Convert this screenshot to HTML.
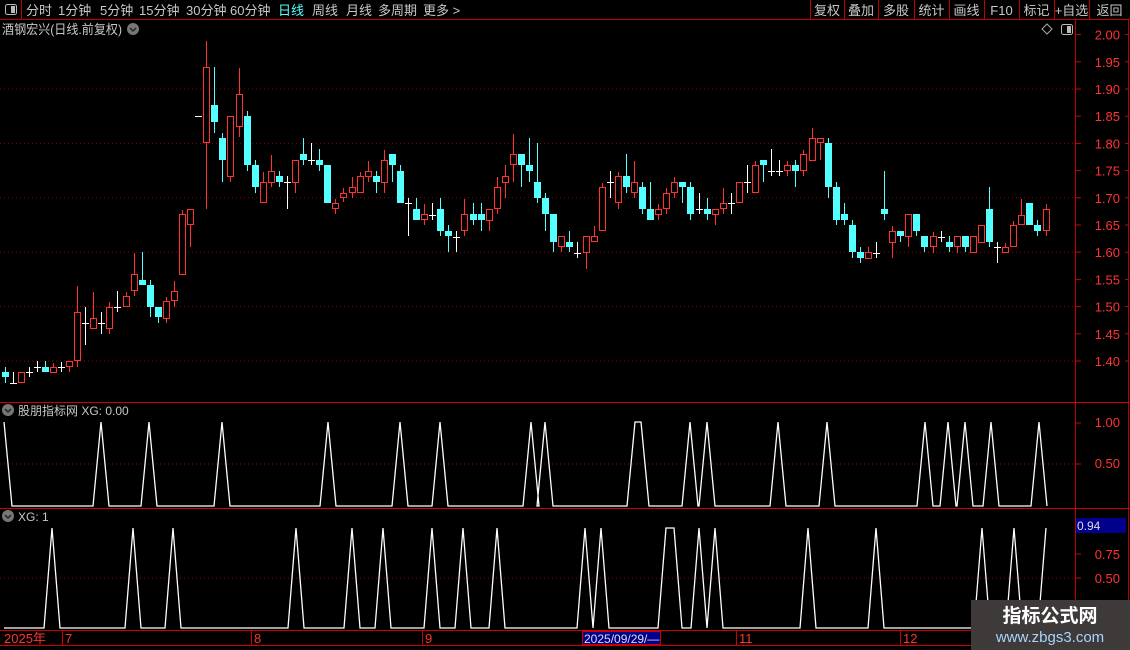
<!DOCTYPE html>
<html><head><meta charset="utf-8"><style>
body{margin:0;background:#000;width:1130px;height:650px;overflow:hidden;font-family:"Liberation Sans","Noto Sans CJK SC",sans-serif;}
svg{position:absolute;left:0;top:0}
text{font-family:"Liberation Sans","Noto Sans CJK SC",sans-serif}
</style></head><body>
<svg id="s" width="1130" height="650" xmlns="http://www.w3.org/2000/svg"></svg>
<script>
var o=[];
function A(s){o.push(s);}
A('<rect x="0" y="0" width="1130" height="19" fill="#000"/>');
A('<line x1="0" y1="19.5" x2="1130" y2="19.5" stroke="#c00000"/>');
A('<line x1="21.5" y1="0" x2="21.5" y2="19" stroke="#c00000"/>');
A('<rect x="5.5" y="4.5" width="11" height="10" rx="2" fill="none" stroke="#bbb"/><rect x="11" y="6" width="4" height="7" fill="#bbb"/>');
var tb=[["分时",26],["1分钟",58],["5分钟",100],["15分钟",139],["30分钟",186],["60分钟",230],["日线",278],["周线",312],["月线",346],["多周期",378],["更多 >",423]];
tb.forEach(function(t){A('<text x="'+t[1]+'" y="15" font-size="13" fill="'+(t[0]=="日线"?"#54ffff":"#c8c8c8")+'">'+t[0]+'</text>');});
var rb=[["复权",810],["叠加",844],["多股",878],["统计",914],["画线",949],["F10",984],["标记",1019],["+自选",1054],["返回",1089]];
rb.forEach(function(t,i){A('<line x1="'+(t[1]+0.5)+'" y1="0" x2="'+(t[1]+0.5)+'" y2="19" stroke="#c00000"/>');
var nx=i<8?rb[i+1][1]:1130;A('<text x="'+((t[1]+nx)/2)+'" y="15" font-size="13" text-anchor="middle" fill="#c8c8c8">'+t[0]+'</text>');});
A('<text x="2" y="34" font-size="13" fill="#c8c8c8" textLength="120" lengthAdjust="spacingAndGlyphs">酒钢宏兴(日线.前复权)</text>');
function chev(x,y){A('<circle cx="'+x+'" cy="'+y+'" r="6" fill="#777"/><path d="M'+(x-3)+' '+(y-1)+'l3 3l3 -3" stroke="#222" stroke-width="1.5" fill="none"/>');}
chev(133,29);
A('<path d="M1047 24l5 5l-5 5l-5 -5z" fill="none" stroke="#aaa"/>');
A('<rect x="1061.5" y="24.5" width="11" height="10" rx="2" fill="none" stroke="#bbb"/><rect x="1067" y="26" width="4" height="7" fill="#bbb"/>');
A('<line x1="1075.5" y1="20" x2="1075.5" y2="630" stroke="#c00000"/>');
A('<line x1="1128.5" y1="20" x2="1128.5" y2="630" stroke="#c00000"/>');
[402.5,508.5,630.5,645.5].forEach(function(y){A('<line x1="0" y1="'+y+'" x2="1130" y2="'+y+'" stroke="#d00000"/>');});
function py(p){return 361-(p-1.40)*544;}
[1.9,1.8,1.7,1.6,1.5,1.4].forEach(function(p){A('<line x1="0" y1="'+py(p)+'" x2="1075" y2="'+py(p)+'" stroke="#900000" stroke-dasharray="1 3"/>');});
for(var p=1.40;p<=2.001;p+=0.05){var y=py(p);A('<line x1="1075" y1="'+y+'" x2="1081" y2="'+y+'" stroke="#d00000"/><line x1="1125" y1="'+y+'" x2="1129" y2="'+y+'" stroke="#d00000"/>');
A('<text x="1120" y="'+(y+5)+'" font-size="13" text-anchor="end" fill="#ff3232">'+p.toFixed(2)+'</text>');}
var C=[
['c',372,377,367,383],['w',383,383,372,383],['r',372,383,372,383],['w',372,372,367,377],['w',367,367,361,372],['c',367,372,361,372],['r',367,373,363,373],['w',367,367,362,372],['r',361,367,361,372],['r',312,361,286,367],
['w',323,323,307,345],['r',318,329,292,329],['w',323,323,312,334],['r',307,329,302,334],['w',307,307,291,312],['r',296,307,292,307],['r',274,291,253,296],['c',280,285,252,285],['c',285,307,280,317],['c',307,317,307,323],
['r',301,319,297,323],['r',291,301,281,307],['r',214,275,210,275],['r',209,225,209,247],['w',116,116,116,116],['r',67,143,41,209],['c',105,122,67,133],['c',138,160,133,182],['r',116,177,116,182],['r',94,127,68,137],
['c',116,165,111,171],['c',165,187,160,193],['r',182,203,172,203],['r',171,183,155,187],['c',176,182,171,187],['w',182,182,176,209],['r',160,183,160,193],['c',154,160,138,165],['w',160,160,143,165],['c',160,165,149,171],
['c',165,203,165,203],['r',203,209,199,214],['r',193,198,188,202],['r',187,193,177,198],['r',176,193,172,193],['r',171,177,161,182],['c',176,182,171,193],['r',160,183,150,193],['c',154,165,154,182],['c',171,203,165,203],
['w',203,203,198,236],['c',209,220,198,220],['r',214,220,204,225],['w',215,215,203,220],['c',209,231,198,236],['c',231,236,225,252],['w',237,237,231,252],['r',214,231,199,236],['c',214,220,203,225],['c',214,220,203,231],
['r',209,221,209,231],['r',187,209,177,214],['r',176,183,165,198],['r',154,165,134,182],['c',154,165,154,187],['c',165,171,138,182],['c',182,198,143,203],['c',198,214,193,231],['c',214,242,214,252],['r',236,247,236,252],
['c',242,247,231,252],['w',253,253,242,258],['r',236,253,236,269],['r',236,242,226,242],['r',187,231,183,231],['w',182,182,171,198],['r',176,203,172,209],['c',176,187,154,193],['r',182,193,161,198],['c',187,209,182,214],
['c',209,220,182,220],['r',209,215,204,220],['r',193,209,188,214],['r',182,193,177,198],['c',182,187,182,203],['c',187,214,182,220],['w',209,209,193,214],['c',209,214,198,220],['r',209,215,209,225],['r',203,209,188,214],
['w',203,203,193,214],['r',182,203,182,203],['w',182,182,165,193],['r',165,193,161,193],['c',160,165,160,182],['w',171,171,149,176],['w',171,171,160,176],['r',165,171,161,176],['c',165,171,160,187],['r',154,171,150,176],
['r',138,161,128,161],['r',138,143,138,160],['c',143,187,138,198],['c',187,220,182,225],['c',214,220,203,225],['c',225,252,220,258],['c',252,258,247,263],['r',252,259,247,259],['w',253,253,242,258],['c',209,214,171,220],
['r',231,243,226,258],['c',231,236,231,242],['r',214,237,214,247],['c',214,231,214,236],['c',236,247,236,252],['r',236,247,232,253],['w',237,237,231,242],['c',242,247,236,252],['r',236,247,236,253],['c',236,247,236,252],
['r',236,253,236,253],['r',225,243,225,243],['c',209,242,187,247],['w',247,247,242,263],['r',247,253,243,253],['r',225,247,221,247],['r',215,225,199,225],['c',203,225,203,225],['c',225,231,220,236],['r',209,231,204,236]];
var col={r:'#ff3232',c:'#54ffff',w:'#ffffff'};
C.forEach(function(c,i){var x=Math.round(4.5+8.07*i)+0.5;var k=col[c[0]];
A('<line x1="'+x+'" y1="'+c[3]+'" x2="'+x+'" y2="'+c[4]+'" stroke="'+k+'"/>');
if(c[0]=='w'){A('<line x1="'+(x-3.5)+'" y1="'+(c[1]+0.5)+'" x2="'+(x+3.5)+'" y2="'+(c[1]+0.5)+'" stroke="#fff"/>');}
else if(c[0]=='c'){A('<rect x="'+(x-3.5)+'" y="'+c[1]+'" width="7" height="'+Math.max(1,c[2]-c[1])+'" fill="#54ffff"/>');}
else{A('<rect x="'+(x-3)+'" y="'+(c[1]+0.5)+'" width="6" height="'+Math.max(1,c[2]-c[1]-1)+'" fill="#000" stroke="#ff3232"/>');}});
chev(8,410);A('<text x="18" y="415" font-size="12" fill="#c8c8c8">股朋指标网 XG: 0.00</text>');
A('<line x1="0" y1="464" x2="1075" y2="464" stroke="#900000" stroke-dasharray="1 3"/>');
A('<text x="1120" y="427" font-size="13" text-anchor="end" fill="#ff3232">1.00</text><text x="1120" y="468" font-size="13" text-anchor="end" fill="#ff3232">0.50</text>');
A('<line x1="1075" y1="423" x2="1081" y2="423" stroke="#d00000"/><line x1="1075" y1="464" x2="1081" y2="464" stroke="#d00000"/>');
function tri(peaks,top,base,w,endx){var d='M4 '+top+' L12 '+base;
peaks.forEach(function(p){var a=p[0],b=p[1]||p[0];d+=' L'+(a-w)+' '+base+' L'+a+' '+top+' L'+b+' '+top+' L'+(b+w)+' '+base;});
d+=' L'+endx+' '+base;return d;}
var p1=[[101],[149],[222],[328],[400],[440],[531],[545],[635,641],[690],[707],[778],[827],[925],[948],[965],[991],[1039]];
A('<path d="'+tri(p1,422,506,8,1047)+'" fill="none" stroke="#fff" stroke-width="1.3"/>');
chev(8,516);A('<text x="18" y="521" font-size="12" fill="#c8c8c8">XG: 1</text>');
A('<line x1="0" y1="578" x2="1075" y2="578" stroke="#900000" stroke-dasharray="1 3"/>');
A('<text x="1120" y="559" font-size="13" text-anchor="end" fill="#ff3232">0.75</text><text x="1120" y="583" font-size="13" text-anchor="end" fill="#ff3232">0.50</text>');
A('<line x1="1075" y1="554" x2="1081" y2="554" stroke="#d00000"/><line x1="1075" y1="578" x2="1081" y2="578" stroke="#d00000"/>');
A('<rect x="1076" y="518" width="50" height="15" fill="#00008c"/><text x="1077" y="530" font-size="12" fill="#ddd">0.94</text>');
var d2='M4 628';var p2=[[52],[133],[173],[296],[352],[383],[432],[463],[497],[585],[601],[666,674],[699],[715],[808],[876],[982],[1014]];
p2.forEach(function(p){var a=p[0],b=p[1]||p[0];d2+=' L'+(a-8)+' 628 L'+a+' 528 L'+b+' 528 L'+(b+8)+' 628';});
d2+=' L1038 628 L1046 528';
A('<path d="'+d2+'" fill="none" stroke="#fff" stroke-width="1.3"/>');
A('<text x="4" y="643" font-size="13" fill="#ff3232">2025年</text>');
[[62,"7"],[251,"8"],[422,"9"],[736,"11"],[900,"12"]].forEach(function(t){A('<line x1="'+(t[0]+0.5)+'" y1="630" x2="'+(t[0]+0.5)+'" y2="645" stroke="#d00000"/><text x="'+(t[0]+3)+'" y="643" font-size="13" fill="#ff3232">'+t[1]+'</text>');});
A('<rect x="582.5" y="631.5" width="78" height="13" fill="#00008c" stroke="#d00000"/><text x="584" y="643" font-size="12" fill="#ddd">2025/09/29/—</text>');
A('<rect x="971" y="600" width="159" height="50" fill="#3e3a39"/>');
A('<text x="1050" y="622" font-size="19" font-weight="bold" text-anchor="middle" fill="#fff">指标公式网</text>');
A('<text x="1050" y="642" font-size="15" text-anchor="middle" fill="#a8d4ff">www.zbgs3.com</text>');
document.getElementById('s').innerHTML=o.join('');
</script>
</body></html>
